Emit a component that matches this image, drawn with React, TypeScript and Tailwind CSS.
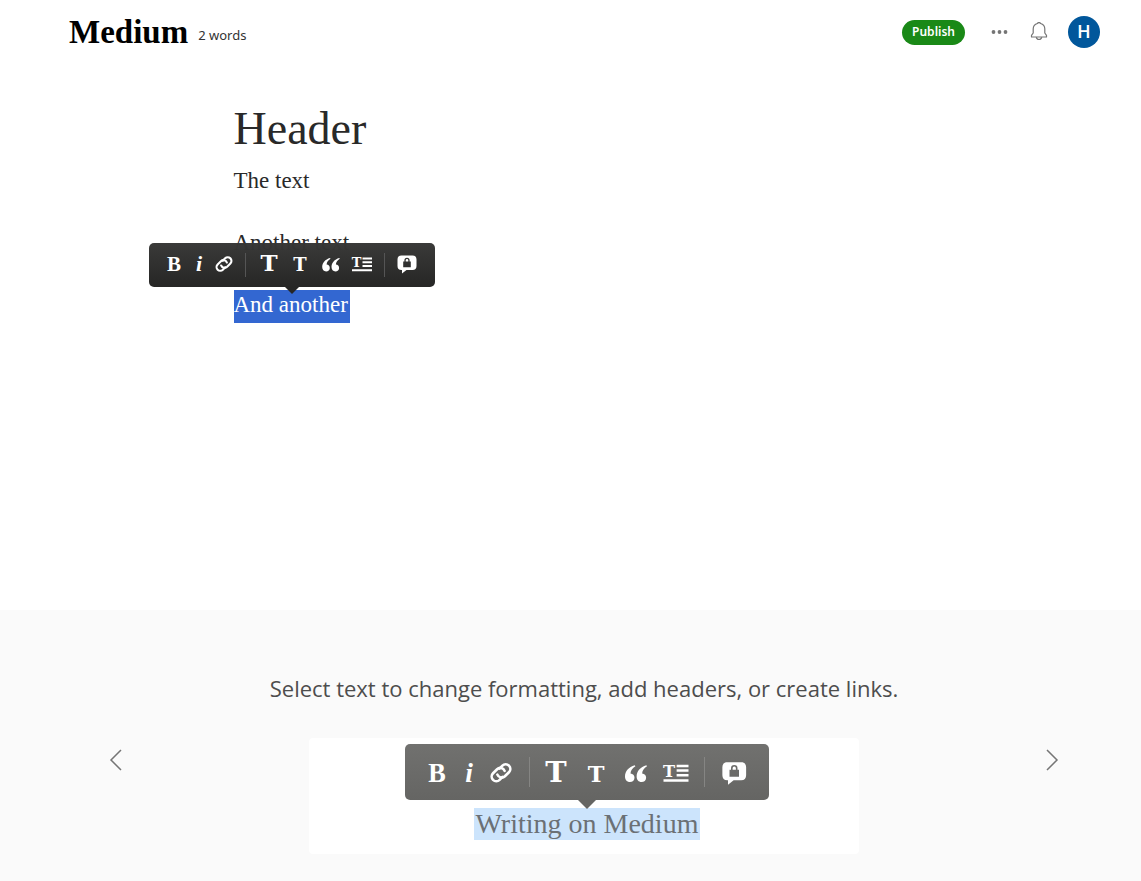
import type { ReactNode } from "react";
import clsx from "clsx";

type ToolbarSize = "sm" | "lg";

function Glyph({ children, size }: { children: ReactNode; size: ToolbarSize }) {
  return (
    <svg
      viewBox="0 0 24 24"
      fill="currentColor"
      aria-hidden="true"
      className={clsx("shrink-0 overflow-visible", size === "sm" ? "size-6" : "mt-[3px] size-[30px]")}
    >
      {children}
    </svg>
  );
}

function Letter({ char, fontSize, italic, slab }: { char: string; fontSize: number; italic?: boolean; slab?: boolean }) {
  return (
    <text
      x="12"
      y="18"
      textAnchor="middle"
      fontSize={fontSize}
      fontWeight="bold"
      fontStyle={italic ? "italic" : "normal"}
      fontFamily={slab ? '"DejaVu Serif", serif' : '"Liberation Serif", serif'}
    >
      {char}
    </text>
  );
}

const styleTools = [
  { label: "Bold", icon: <Letter char="B" fontSize={21} /> },
  { label: "Italic", icon: <Letter char="i" fontSize={22} italic /> },
  {
    label: "Link",
    icon: (
      <g fill="none" stroke="currentColor" strokeWidth="2.100" strokeLinecap="round" transform="rotate(-45 12 11)">
        <path d="M10.500 14.200H7.200a3.700 3.700 0 0 1 0-7.400h4.600a3.700 3.700 0 0 1 3.300 5.200" />
        <path d="M13.500 7.800h3.300a3.700 3.700 0 0 1 0 7.400h-4.600A3.700 3.700 0 0 1 8.900 10" />
      </g>
    ),
  },
];

const blockTools = [
  { label: "Large heading", icon: <Letter char="T" fontSize={23} slab /> },
  { label: "Small heading", icon: <Letter char="T" fontSize={18} slab /> },
  {
    label: "Quote",
    icon: (
      <>
        <path d="M11 5C6.200 6.400 3.200 9.800 3.200 14c0 2.700 1.600 4.400 3.900 4.400 2.100 0 3.700-1.500 3.700-3.500 0-1.900-1.300-3.300-3.200-3.400.2-2.300 1.500-4.200 3.900-5.700z" />
        <path d="M20.300 5c-4.800 1.400-7.800 4.800-7.800 9 0 2.700 1.600 4.400 3.900 4.400 2.100 0 3.700-1.500 3.700-3.500 0-1.900-1.300-3.300-3.200-3.400.2-2.300 1.500-4.200 3.900-5.700z" />
      </>
    ),
  },
  {
    label: "Drop cap",
    icon: (
      <>
        <text x="6.500" y="14" textAnchor="middle" fontSize="13" fontWeight="bold" fontFamily='"DejaVu Serif", serif'>
          T
        </text>
        <path d="M12.500 4.500H22v2h-9.500zM12.500 8.200H22v2h-9.500zM12.500 12H22v2h-9.500zM2 16.200h20v2H2z" />
      </>
    ),
  },
];

const noteTools = [
  {
    label: "Private note",
    icon: (
      <path
        transform="translate(1 0)"
        fillRule="evenodd"
        d="M6.500 2.500h11c2.700 0 4 1.500 4 4V13c0 2.500-1.300 4-4 4h-6L7 20.500V17h-.5c-2.700 0-4-1.500-4-4V6.500c0-2.500 1.300-4 4-4zM8.200 8.500h1.200V7.300a2.600 2.600 0 0 1 5.200 0v1.200h1.200v5.700H8.200zM10.700 8.500h2.600V7.300a1.300 1.300 0 0 0-2.600 0z"
      />
    ),
  },
];

function ToolGroup({ tools, size, narrow }: { tools: { label: string; icon: ReactNode }[]; size: ToolbarSize; narrow?: boolean }) {
  const width = size === "sm" ? (narrow ? "w-[25px]" : "w-[31px]") : narrow ? "w-8" : "w-10";
  return (
    <div className="flex">
      {tools.map((tool) => (
        <button key={tool.label} type="button" aria-label={tool.label} className={clsx("flex justify-center", width)}>
          <Glyph size={size}>{tool.icon}</Glyph>
        </button>
      ))}
    </div>
  );
}

function Toolbar({ size }: { size: ToolbarSize }) {
  const sm = size === "sm";
  return (
    <div
      role="toolbar"
      aria-label="Text formatting"
      className={clsx(
        "relative flex items-center rounded-[5px] bg-linear-to-b text-white",
        sm ? "h-11 from-[#363635]/98 to-[#262625] px-[13px]" : "h-14 from-[#71716f] to-[#656563] px-4",
      )}
    >
      <ToolGroup tools={styleTools} size={size} narrow />
      <span className={clsx("w-px", sm ? "mx-2 h-6 bg-[#555]" : "mr-1.5 ml-3 h-[30px] bg-[#858583]")} />
      <ToolGroup tools={blockTools} size={size} />
      <span className={clsx("w-px", sm ? "mx-1.5 h-6 bg-[#555]" : "mx-2 h-[30px] bg-[#858583]")} />
      <ToolGroup tools={noteTools} size={size} />
      <svg
        viewBox="0 0 16 8"
        aria-hidden="true"
        className={clsx("absolute top-full left-1/2 -translate-x-1/2", sm ? "h-[7px] w-4 fill-[#262625]" : "h-[9px] w-5 fill-[#656563]")}
      >
        <path d="M0 0h16L8 8z" />
      </svg>
    </div>
  );
}

function Header() {
  return (
    <header className="flex h-16 items-center justify-between pr-[41px] pl-[69px]">
      <div className="flex items-center gap-2.5">
        <a href="#" className="font-['Liberation_Serif',serif] text-[33px] leading-10 font-bold text-black">
          Medium
        </a>
        <span className="pt-1.5 font-['Noto_Sans',sans-serif] text-[13px] leading-5 text-[#333]">2 words</span>
      </div>
      <div className="flex items-center font-['Roboto',sans-serif]">
        <button
          type="button"
          className="h-[25px] rounded-full bg-[#1a8917] px-2.5 font-['Noto_Sans',sans-serif] text-xs font-semibold text-white"
        >
          Publish
        </button>
        <button type="button" aria-label="More" className="ml-[26px] text-[#757575]">
          <svg viewBox="0 0 17 5" fill="currentColor" className="h-[5px] w-[17px]">
            <circle cx="2.500" cy="2" r="1.900" />
            <circle cx="8.500" cy="2" r="1.900" />
            <circle cx="14.500" cy="2" r="1.900" />
          </svg>
        </button>
        <button type="button" aria-label="Notifications" className="ml-[22px] text-[#757575]">
          <svg viewBox="0 0 18 20" fill="none" stroke="currentColor" strokeWidth="1.200" strokeLinejoin="round" className="h-5 w-[18px]">
            <path d="M1.500 15v-1.700l1.700-2.300V6.700a5.600 5.600 0 0 1 4.200-5.200c.4-1.300 2.800-1.300 3.200 0a5.600 5.600 0 0 1 4.200 5.200V11l1.700 2.300V15z" />
            <path d="M6.300 15.200c.2 1.500 1.300 2.300 2.700 2.300s2.500-.8 2.700-2.300" />
          </svg>
        </button>
        <button type="button" aria-label="Account" className="ml-5 size-8 rounded-full bg-[#01579b] text-lg font-medium text-white">
          H
        </button>
      </div>
    </header>
  );
}

function Editor() {
  return (
    <main className="pt-10 pr-[43px] pb-10 pl-[69px] font-['Liberation_Serif',serif] text-[#292929]">
      <article className="mx-auto max-w-[700px]">
        <h1 className="mb-3 text-[46px] leading-[50px]">Header</h1>
        <div className="space-y-[29px] text-[23px] leading-[29px]">
          <p className="pb-1">The text</p>
          <p className="pb-1">Another text</p>
          <p className="relative w-fit bg-[#3367d1] pr-0.5 pb-1 text-white">
            And another
            <span className="absolute bottom-full left-1/2 mb-[3px] block -translate-x-1/2">
              <Toolbar size="sm" />
            </span>
          </p>
        </div>
      </article>
    </main>
  );
}

function Arrow({ label, d }: { label: string; d: string }) {
  return (
    <button type="button" aria-label={label} className="mt-[11px] text-[#757575]">
      <svg viewBox="0 0 13 22" fill="none" stroke="currentColor" strokeWidth="1.500" className="h-[22px] w-[13px]">
        <path d={d} />
      </svg>
    </button>
  );
}

function Tips() {
  return (
    <section className="mt-auto bg-[#fafafa] pt-[62px] pr-[42px] pb-[27px] pl-[69px]">
      <h2 className="text-center font-['Open_Sans',sans-serif] text-[22px] leading-8 text-[#4d4d4d]">
        Select text to change formatting, add headers, or create links.
      </h2>
      <div className="mt-[34px] flex items-start justify-between px-10">
        <Arrow label="Previous tip" d="M12 1L2 11l10 10" />
        <div className="flex w-full max-w-[550px] flex-col items-center rounded-sm bg-white pt-1.5 pb-3.5 pl-1.5">
          <Toolbar size="lg" />
          <p className="mt-2 bg-[#cce4fc] px-0.5 font-['Liberation_Serif',serif] text-[28px] leading-8 text-[#6b7075]">
            Writing on Medium
          </p>
        </div>
        <Arrow label="Next tip" d="M1 1l10 10L1 21" />
      </div>
    </section>
  );
}

export default function App() {
  return (
    <div className="flex min-h-screen flex-col bg-white">
      <Header />
      <Editor />
      <Tips />
    </div>
  );
}
